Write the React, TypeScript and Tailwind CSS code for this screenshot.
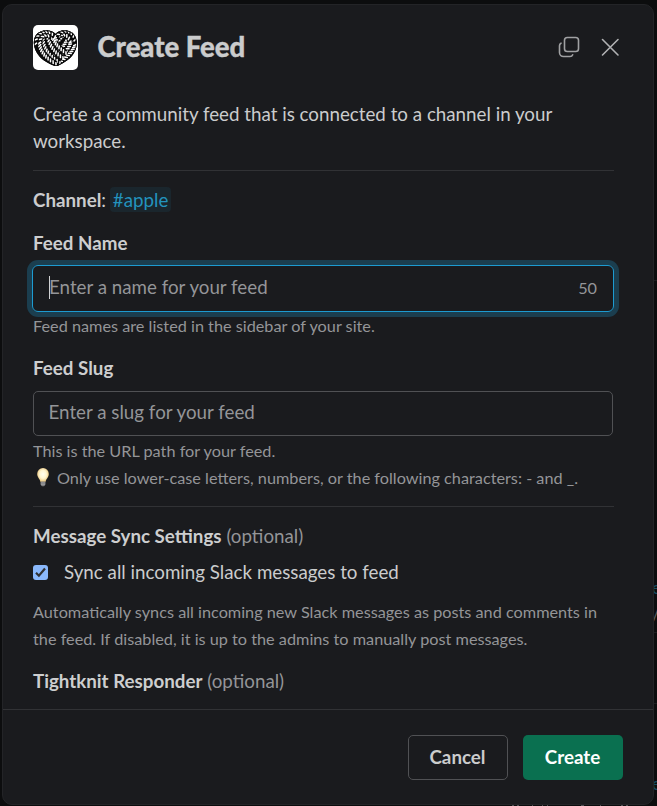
import React from "react";

type Strand = [number, number, number, number, number, number, number, number];

const strands: Strand[] = [
  [42, 20, 39, 28, 33, 33, 22, 40],
  [38, 17, 36, 24, 30, 30, 20, 36],
  [34, 15, 31, 21, 27, 25, 20, 30],
  [31, 10, 27, 13, 24, 18, 20, 23],
  [20, 12, 21, 18, 26, 23, 33, 28],
  [15, 13, 17, 21, 22, 28, 30, 33],
  [10, 15, 11, 25, 17, 31, 27, 38],
  [23, 15, 27, 6, 36, 9, 37, 17],
  [22, 13, 29, 1, 44, 5, 42, 20],
  [19, 13, 13, 7, 7, 11, 6.5, 18],
  [6.5, 18, 7, 27, 13, 33, 23, 39],
  [22, 12, 16, 2, 2, 6, 2.5, 19],
];

function twist([x0, y0, x1, y1, x2, y2, x3, y3]: Strand) {
  const steps = Math.round(Math.hypot(x3 - x0, y3 - y0) / 3.1) + 1;
  const lines: string[] = [];
  for (let i = 0; i <= steps; i++) {
    const t = i / steps;
    const u = 1 - t;
    const x = u * u * u * x0 + 3 * u * u * t * x1 + 3 * u * t * t * x2 + t * t * t * x3;
    const y = u * u * u * y0 + 3 * u * u * t * y1 + 3 * u * t * t * y2 + t * t * t * y3;
    const dx = 3 * u * u * (x1 - x0) + 6 * u * t * (x2 - x1) + 3 * t * t * (x3 - x2);
    const dy = 3 * u * u * (y1 - y0) + 6 * u * t * (y2 - y1) + 3 * t * t * (y3 - y2);
    const len = Math.hypot(dx, dy) || 1;
    const ax = (dx / len) * 0.8 - (dy / len) * 1.1;
    const ay = (dy / len) * 0.8 + (dx / len) * 1.1;
    lines.push(`M${x - ax} ${y - ay}L${x + ax} ${y + ay}`);
  }
  return lines.join("");
}

const heart =
  "M22.500 9 C27 4 37 4 41.500 10 C47 19 42 30 34 35.500 C29 39 26 41 22 41 C18 40 15 38 11 35.500 C2 29 -2 18 3 10 C8 4 18 4 22.500 9Z";

function KnotLogo() {
  return (
    <svg viewBox="0 0 45 45" className="size-[45px] shrink-0 rounded-[5px] bg-white">
      <defs>
        <clipPath id="heart">
          <path d={heart} />
        </clipPath>
      </defs>
      <g clipPath="url(#heart)" fill="none">
        <rect width="45" height="45" fill="#0a0a0a" />
        {strands.map((s) => (
          <g key={s.join()}>
            <path d={`M${s[0]} ${s[1]}C${s.slice(2).join(" ")}`} stroke="#0a0a0a" strokeWidth="5.4" />
            <path d={twist(s)} stroke="#fff" strokeWidth="1.5" strokeLinecap="round" />
          </g>
        ))}
        <path d={heart} stroke="#0a0a0a" strokeWidth="1.6" />
      </g>
    </svg>
  );
}

function Bulb() {
  return (
    <svg viewBox="0 0 20 20" className="mr-[4px] size-5 shrink-0 -translate-y-px">
      <defs>
        <radialGradient id="glow" cx=".5" cy=".45" r=".58">
          <stop offset="0" stopColor="#fffef0" />
          <stop offset=".5" stopColor="#fff5cf" />
          <stop offset="1" stopColor="#e5bc6d" />
        </radialGradient>
      </defs>
      <path d="M10 1a5.800 5.800 0 0 0-5.800 5.900c0 3.600 2.900 4.800 3.300 8.100h5c.4-3.300 3.300-4.500 3.300-8.100A5.800 5.800 0 0 0 10 1Z" fill="url(#glow)" />
      <path d="M7.600 14.500h4.800v3.200L11 19.200H9l-1.400-1.500Z" fill="#77777a" />
      <path d="M7.600 16h4.800M8 17.700h4" stroke="#b5b5b5" strokeWidth=".6" />
    </svg>
  );
}

function Label({ children, optional }: { children: React.ReactNode; optional?: boolean }) {
  return (
    <div className="h-[28px] text-[18.750px] leading-[28px] font-bold text-[#cdcecf]">
      {children}
      {optional && <span className="font-normal text-[#949598]"> (optional)</span>}
    </div>
  );
}

export default function App() {
  return (
    <div className="relative h-[806px] w-[657px] overflow-hidden bg-[#0c0d0e] font-['Lato',sans-serif] text-[18.750px] text-[#cbcccd]">
      <div className="absolute top-[578px] left-[652px] text-[17px] leading-5 text-[#164b61]">e</div>
      <div className="absolute top-[605px] left-[652px] text-[17px] leading-5 text-[#5b5c5e]">/</div>
      <div className="absolute top-[774px] left-[652px] text-[17px] leading-5 text-[#164b61]">e</div>
      <div className="absolute top-[280px] left-[653px] h-px w-1 bg-[#1c1d1f]" />
      <div className="absolute top-[632px] left-[653px] h-px w-1 bg-[#1c1d1f]" />
      <div className="absolute top-[703px] left-[653px] h-px w-1 bg-[#1c1d1f]" />

      <div className="relative mt-[4px] ml-[2px] flex h-[801px] w-[652px] flex-col rounded-[10px] border border-[#232427] bg-[#1a1b1e]">
        <header className="flex h-[85px] items-center pl-[30px]">
          <KnotLogo />
          <h1 className="ml-[19.500px] -translate-y-px text-[27.500px] leading-[36px] font-black text-[#cbcccd] [-webkit-text-stroke:0.4px_#cbcccd]">Create Feed</h1>
          <svg viewBox="0 0 24 24" className="ml-auto size-6 -translate-y-px text-[#a0a1a3]" fill="none" stroke="currentColor" strokeWidth="1.600" strokeLinecap="round" strokeLinejoin="round">
            <rect x="7.500" y="2.500" width="14" height="14" rx="2.800" />
            <path d="M4 8.200C3 8.700 2.500 9.500 2.500 10.800v6.700a4 4 0 0 0 4 4H13c1.300 0 2.200-.5 2.700-1.700" />
          </svg>
          <svg viewBox="0 0 24 24" className="mr-[31px] ml-[17px] size-6 -translate-y-px text-[#b0b1b3]" fill="none" stroke="currentColor" strokeWidth="1.600" strokeLinecap="round">
            <path d="m4.500 4.500 15.500 15.500M20 4.500 4.500 20" />
          </svg>
        </header>

        <main className="flex h-[619px] flex-col overflow-hidden pr-[39px] pl-[30px]">
          <p className="mt-[10px] h-[55px] leading-[27px]">
            Create a community feed that is connected to a channel in your
            <br />
            workspace.
          </p>
          <hr className="mt-[15px] border-[#313235]" />
          <div className="mt-[15px] h-[28px] leading-[28px]">
            <b>Channel</b>:{" "}
            <span className="-ml-[0.500px] rounded-[4px] bg-[#1a262d] px-[2.500px] py-[1px] text-[#2393be]">#apple</span>
          </div>

          <div className="mt-[15px]">
            <Label>Feed Name</Label>
          </div>
          <div className="-ml-px mt-[8px] flex h-[47px] shrink-0 items-center rounded-[6px] border border-[#1d9bd1] pr-[16px] pl-[16px] shadow-[0_0_0_5px_#1b3e4f]">
            <span className="h-[23px] w-px -translate-y-px bg-[#d1d2d3]" />
            <span className="-ml-px -translate-y-px text-[#949598]">Enter a name for your feed</span>
            <span className="ml-auto text-[16.250px] text-[#949598]">50</span>
          </div>
          <p className="h-[27px] text-[16.250px] leading-[27px] text-[#949598]">Feed names are listed in the sidebar of your site.</p>

          <div className="mt-[15px]">
            <Label>Feed Slug</Label>
          </div>
          <div className="mt-[9px] mr-px flex h-[45px] shrink-0 items-center rounded-[5px] border border-[#505154] px-[14.500px] text-[#949598]">
            <span className="-translate-y-px">Enter a slug for your feed</span>
          </div>
          <p className="mt-px h-[27px] text-[16.250px] leading-[27px] text-[#949598]">This is the URL path for your feed.</p>
          <p className="flex h-[27px] items-center text-[16.250px] leading-[27px] text-[#949598]">
            <Bulb />
            Only use lower-case letters, numbers, or the following characters: - and _.
          </p>
          <hr className="mt-[15px] border-[#313235]" />

          <div className="mt-[15px]">
            <Label optional>Message Sync Settings</Label>
          </div>
          <div className="mt-[8px] flex h-[28px] items-center">
            <span className="flex size-[15px] items-center justify-center rounded-[3px] bg-[#8ab8fb]">
              <svg viewBox="0 0 15 15" className="size-[15px]" fill="none" stroke="#303133" strokeWidth="2.200">
                <path d="m3 7.800 2.900 2.900L12 3.500" />
              </svg>
            </span>
            <span className="ml-[16px]">Sync all incoming Slack messages to feed</span>
          </div>
          <p className="mt-[12px] h-[54px] text-[16.250px] leading-[27px] text-[#949598]">
            Automatically syncs all incoming new Slack messages as posts and comments in
            <br />
            the feed. If disabled, it is up to the admins to manually post messages.
          </p>
          <div className="mt-[15px]">
            <Label optional>Tightknit Responder</Label>
          </div>
        </main>

        <footer className="flex flex-1 justify-end gap-[15px] border-t border-[#313235] pt-[25px] pr-[30px]">
          <button className="h-[45px] w-[100px] rounded-[5px] border border-[#505154] pr-px font-bold">Cancel</button>
          <button className="h-[45px] w-[100px] rounded-[5px] bg-[#0a7050] pr-px font-bold text-white">Create</button>
        </footer>
      </div>
      <div className="absolute top-[805px] left-[512px] flex h-px items-stretch">
        <span className="w-[2px] bg-[#505154]" />
        <span className="ml-[3px] w-[2px] bg-[#505154]" />
        <span className="ml-[13px] w-px bg-[#505154]" />
        <span className="ml-[9px] w-px bg-[#505154]" />
        <span className="ml-[4px] w-px bg-[#505154]" />
        <span className="ml-[33px] w-[3px] bg-[#505154]" />
        <span className="ml-[16px] w-px bg-[#505154]" />
        <span className="ml-[20px] w-[2px] bg-[#505154]" />
        <span className="ml-[3px] w-[2px] bg-[#505154]" />
      </div>
    </div>
  );
}
